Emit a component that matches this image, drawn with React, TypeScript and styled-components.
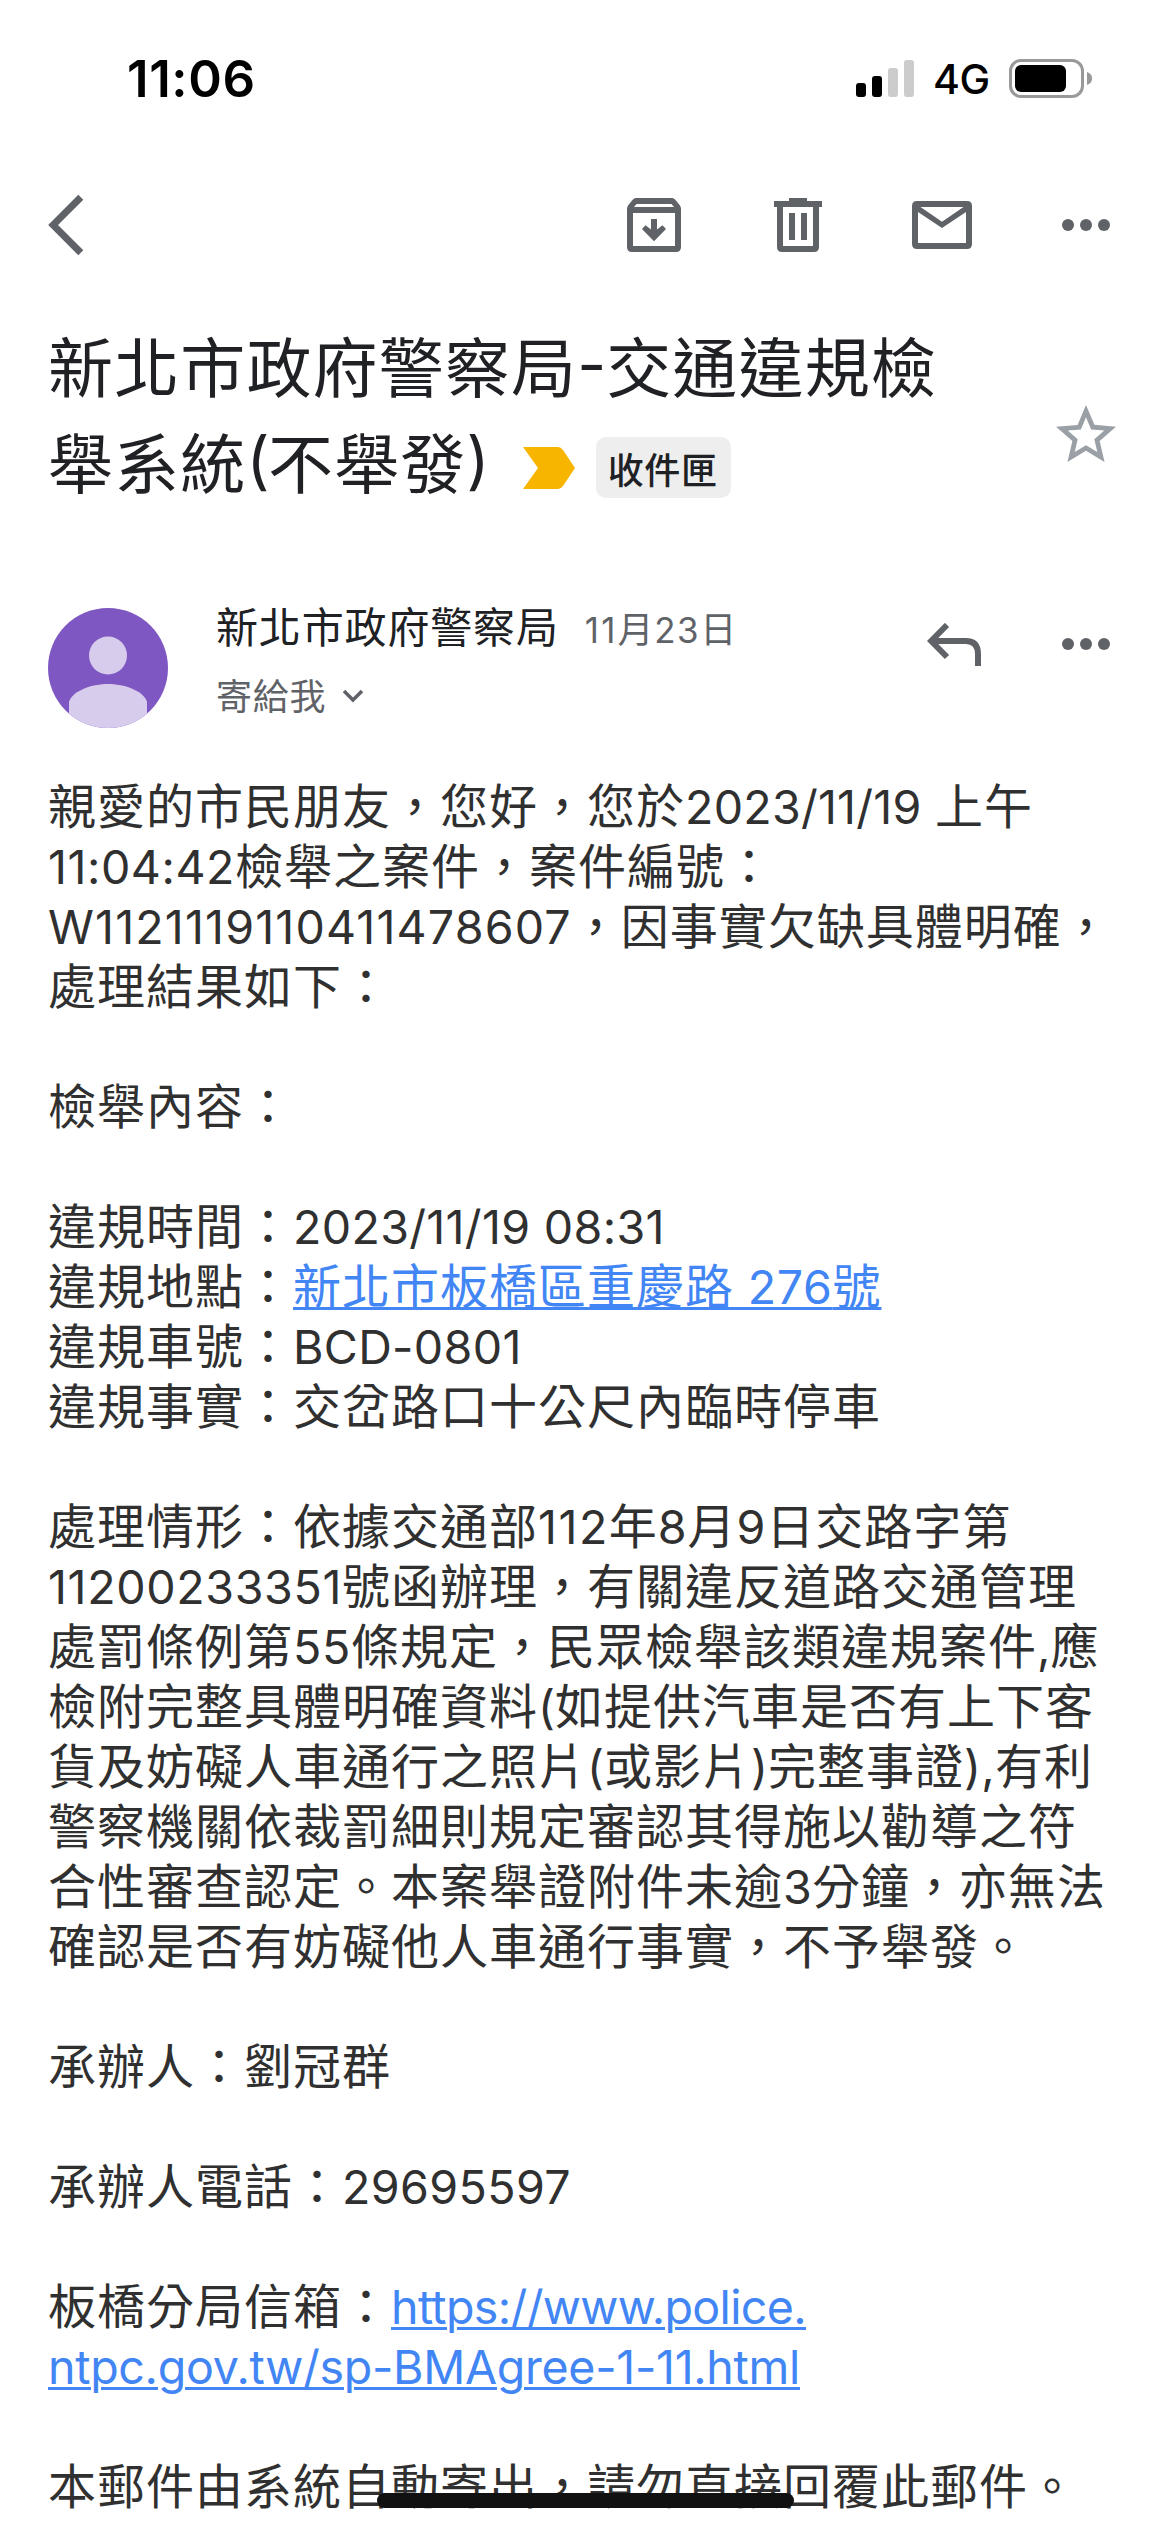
import React from "react";
import styled, { createGlobalStyle } from "styled-components";

const Global = createGlobalStyle`
  * { box-sizing: border-box; }
  body { margin: 0; background: #fff; }
`;

const cjk = `"Noto Sans CJK TC", sans-serif`;
const latin = `Inter, "Noto Sans CJK TC", sans-serif`;

const Screen = styled.div`
  position: relative;
  width: 1170px;
  height: 2532px;
  overflow: hidden;
  background: #fff;
  font-family: ${cjk};
  color: #202124;
`;
const StatusBar = styled.header`
  display: flex;
  align-items: center;
  justify-content: space-between;
  height: 156px;
  padding: 0 78px 0 127px;
  font-family: ${latin};
  color: #000;
`;
const Clock = styled.div`
  font-size: 51px;
  font-weight: 600;
  letter-spacing: 0.6px;
`;
const StatusIcons = styled.div`
  display: flex;
  align-items: center;
`;
const Network = styled.span`
  width: 56px;
  margin: 2px 20px 0 19px;
  font-size: 41px;
  line-height: 40px;
  font-weight: 500;
  letter-spacing: -0.5px;
`;
const Toolbar = styled.nav`
  display: flex;
  align-items: center;
  height: 138px;
  padding: 0 48px;
`;
const Actions = styled.div`
  display: flex;
  gap: 72px;
  margin-left: auto;
`;
const IconSvg = styled.svg<{ $color?: string }>`
  display: block;
  flex: none;
  fill: ${(p) => p.$color ?? "#5f6368"};
`;
const SubjectRow = styled.section`
  display: flex;
  height: 214px;
  padding: 22px 48px 0;
  justify-content: space-between;
`;
const Subject = styled.h1`
  margin: 0;
  font-size: 65px;
  font-weight: 400;
  line-height: 96px;
  letter-spacing: 1.15px;
`;
const SubjectLine = styled.div`
  display: flex;
  align-items: center;
  height: 96px;
  white-space: nowrap;
`;
const Marker = styled(IconSvg)`
  margin: 16px 21px 0 34.5px;
`;
const Chip = styled.span`
  display: flex;
  align-items: center;
  justify-content: center;
  width: 135px;
  height: 61px;
  margin-top: 15px;
  padding-right: 1px;
  border-radius: 10px;
  background: #eee;
  font-size: 36px;
  font-weight: 500;
  line-height: 60px;
  letter-spacing: 0.6px;
`;
const StarButton = styled.div`
  margin-top: 83px;
`;
const SenderRow = styled.section`
  display: flex;
  height: 220px;
  padding: 100px 60px 0 48px;
`;
const SenderText = styled.div`
  margin-left: 48px;
`;
const NameLine = styled.div`
  display: flex;
  height: 60px;
  margin-top: -13px;
  align-items: baseline;
  font-size: 42px;
  line-height: 60px;
  letter-spacing: 0.85px;
`;
const DateText = styled.span`
  margin-left: 26px;
  font-size: 36px;
  letter-spacing: 0.6px;
  color: #5f6368;
`;
const ToLine = styled.div`
  display: flex;
  align-items: center;
  gap: 16px;
  margin-top: 9px;
  height: 60px;
  font-size: 36px;
  line-height: 60px;
  letter-spacing: 0.7px;
  color: #5f6368;
`;
const Caret = styled.svg`
  margin-top: 4px;
`;
const SenderActions = styled.div`
  display: flex;
  align-items: flex-start;
  gap: 81px;
  margin-left: auto;
  margin-top: 15px;
`;
const MoreIcon = styled(IconSvg)`
  margin-top: 15px;
`;
const Body = styled.article`
  padding: 45px 0 0 48px;
  color: #303030;
  font-size: 48px;
  line-height: 60px;
  letter-spacing: 1px;
`;
const Line = styled.div`
  height: 60px;
  white-space: pre;
`;
const Run = styled.span<{ $track?: number }>`
  font-family: ${latin};
  font-size: 0.97em;
  line-height: 0;
  letter-spacing: ${(p) => p.$track ?? 0}px;
`;
const Link = styled.a`
  color: #4285f4;
  text-decoration: underline;
  text-decoration-thickness: 3px;
  text-underline-offset: 3px;
`;
const HomeIndicator = styled.div`
  position: absolute;
  left: 377px;
  top: 2493px;
  width: 417px;
  height: 15px;
  border-radius: 8px;
  background: #111;
`;

type Part = string | { t: string; track: number } | { link: Part[] };
const L = (t: string, track = 0): Part => ({ t, track });

const lines: Part[][] = [
  ["親愛的市民朋友，您好，您於", L("2023/11/19 ", 0.25), "上午"],
  [L("11:04:42", 0.55), "檢舉之案件，案件編號："],
  [L("W1121119110411478607", 1.18), "，因事實欠缺具體明確，"],
  ["處理結果如下："],
  [],
  ["檢舉內容："],
  [],
  ["違規時間：", L("2023/11/19 08:31", 0.33)],
  ["違規地點：", { link: ["新北市板橋區重慶路", L(" 276", 0.6), "號"] }],
  ["違規車號：", L("BCD-0801", 0.35)],
  ["違規事實：交岔路口十公尺內臨時停車"],
  [],
  ["處理情形：依據交通部", L("112", 1.5), "年", L("8", 0.9), "月", L("9", 0.9), "日交路字第"],
  [L("11200233351", 0.65), "號函辦理，有關違反道路交通管理"],
  ["處罰條例第", L("55", 0.7), "條規定，民眾檢舉該類違規案件", L(","), "應"],
  ["檢附完整具體明確資料", L("("), "如提供汽車是否有上下客"],
  ["貨及妨礙人車通行之照片", L("("), "或影片", L(")"), "完整事證", L("),", 0.3), "有利"],
  ["警察機關依裁罰細則規定審認其得施以勸導之符"],
  ["合性審查認定。本案舉證附件未逾", L("3", 0.3), "分鐘，亦無法"],
  ["確認是否有妨礙他人車通行事實，不予舉發。"],
  [],
  ["承辦人：劉冠群"],
  [],
  ["承辦人電話：", L("29695597", 0.4)],
  [],
  ["板橋分局信箱：", { link: [L("https://www.police.", -0.64)] }],
  [{ link: [L("ntpc.gov.tw/sp-BMAgree-1-11.html", -0.3)] }],
  [],
  ["本郵件由系統自動寄出，請勿直接回覆此郵件。"],
];

const renderPart = (p: Part, i: number): React.ReactNode => {
  if (typeof p === "string") return <React.Fragment key={i}>{p}</React.Fragment>;
  if ("link" in p) return <Link key={i}>{p.link.map(renderPart)}</Link>;
  return (
    <Run key={i} $track={p.track}>
      {p.t}
    </Run>
  );
};

export default function App() {
  return (
    <Screen>
      <Global />
      <StatusBar>
        <Clock>11:06</Clock>
        <StatusIcons>
          <svg width="58" height="38" viewBox="0 0 58 38">
            <rect x="0" y="24" width="10" height="14" rx="3" />
            <rect x="16" y="17" width="10" height="21" rx="3" />
            <rect x="32" y="9" width="10" height="29" rx="3" fill="#ccc" />
            <rect x="48" y="1" width="10" height="37" rx="3" fill="#ccc" />
          </svg>
          <Network>4G</Network>
          <svg width="83" height="39" viewBox="0 0 83 39">
            <rect x="1.5" y="1.5" width="72" height="36" rx="10.5" fill="none" stroke="#999" strokeWidth="3" />
            <rect x="6" y="6" width="51" height="27" rx="6" />
            <path d="M78 13a8 7 0 0 1 0 13z" fill="#999" />
          </svg>
        </StatusIcons>
      </StatusBar>

      <Toolbar>
        <IconSvg width="36" height="62" viewBox="0 0 36 62">
          <path d="M30.300 .8L35.300 5.800 10 31 35.300 56.200 30.300 61.200 .2 31z" />
        </IconSvg>
        <Actions>
          <IconSvg width="72" height="72" viewBox="0 0 72 72">
            <path
              fillRule="evenodd"
              d="M18 9H54Q56 9 57.500 11L62 16.500Q63 18 63 20V58Q63 63 58 63H14Q9 63 9 58V20Q9 18 10 16.500L14.500 11Q16 9 18 9ZM18.500 15L16 18H56L53.500 15ZM15 24V57H57V24Z"
            />
            <path d="M33 30H39V40.500L44.500 36.300 48 40 36 52.300 24 40 27.500 36.300 33 40.500Z" />
          </IconSvg>
          <IconSvg width="72" height="72" viewBox="0 0 72 72">
            <path
              fillRule="evenodd"
              d="M27 9H45V12H60V18H57V58Q57 63 52 63H20Q15 63 15 58V18H12V12H27ZM21 18V57H51V18ZM27 24H33V51H27ZM39 24H45V51H39Z"
            />
          </IconSvg>
          <IconSvg width="72" height="72" viewBox="0 0 72 72">
            <path
              fillRule="evenodd"
              d="M11 12H61Q66 12 66 17V55Q66 60 61 60H11Q6 60 6 55V17Q6 12 11 12ZM14.500 18L36 32.700 57.500 18ZM12 23V54H60V23L36 39Z"
            />
          </IconSvg>
          <IconSvg width="72" height="72" viewBox="0 0 72 72">
            <circle cx="18" cy="36" r="6" />
            <circle cx="36" cy="36" r="6" />
            <circle cx="54" cy="36" r="6" />
          </IconSvg>
        </Actions>
      </Toolbar>

      <SubjectRow>
        <Subject>
          <SubjectLine>
            新北市政府警察局<Run>-</Run>交通違規檢
          </SubjectLine>
          <SubjectLine>
            舉系統<Run $track={-1.4}>(</Run>不舉發<Run $track={-1.4}>)</Run>
            <Marker width="52" height="42" viewBox="0 0 52 42" $color="#f7b500">
              <path d="M0 0H35Q38 0 40 3L52 21 40 39Q38 42 35 42H0L15 21Z" />
            </Marker>
            <Chip>收件匣</Chip>
          </SubjectLine>
        </Subject>
        <StarButton>
          <IconSvg width="72" height="72" viewBox="0 0 24 24" $color="#9aa0a6">
            <path d="M22 9.240l-7.190-.62L12 2 9.190 8.630 2 9.240l5.460 4.730L5.820 21 12 17.270 18.180 21l-1.630-7.030L22 9.240zM12 15.400l-3.760 2.270 1-4.280-3.320-2.880 4.380-.38L12 6.100l1.710 4.040 4.380.38-3.320 2.880 1 4.280L12 15.400z" />
          </IconSvg>
        </StarButton>
      </SubjectRow>

      <SenderRow>
        <svg width="120" height="120" viewBox="0 0 120 120">
          <defs>
            <clipPath id="disc">
              <circle cx="60" cy="60" r="60" />
            </clipPath>
          </defs>
          <g clipPath="url(#disc)">
            <rect width="120" height="120" fill="#7e57c2" />
            <circle cx="60" cy="47.500" r="19" fill="#d8ccec" />
            <path d="M21 120V94C23 85 40 76 60 76S97 85 99 94V120Z" fill="#d8ccec" />
          </g>
        </svg>
        <SenderText>
          <NameLine>
            新北市政府警察局
            <DateText>
              <Run $track={2.2}>11</Run>月<Run $track={1.6}>23</Run>日
            </DateText>
          </NameLine>
          <ToLine>
            寄給我
            <Caret width="22" height="14" viewBox="0 0 22 14">
              <path d="M2 2L11 11 20 2" fill="none" stroke="#5f6368" strokeWidth="3.500" />
            </Caret>
          </ToLine>
        </SenderText>
        <SenderActions>
          <svg width="54" height="43" viewBox="0 0 54 43">
            <path d="M20 2L4.200 18 20 34M5 18H39Q51 18 51 31V43" fill="none" stroke="#5f6368" strokeWidth="6" />
          </svg>
          <MoreIcon width="48" height="12" viewBox="0 0 48 12">
            <circle cx="6" cy="6" r="6" />
            <circle cx="24" cy="6" r="6" />
            <circle cx="42" cy="6" r="6" />
          </MoreIcon>
        </SenderActions>
      </SenderRow>

      <Body>
        {lines.map((l, i) => (
          <Line key={i}>{l.map(renderPart)}</Line>
        ))}
      </Body>
      <HomeIndicator />
    </Screen>
  );
}
